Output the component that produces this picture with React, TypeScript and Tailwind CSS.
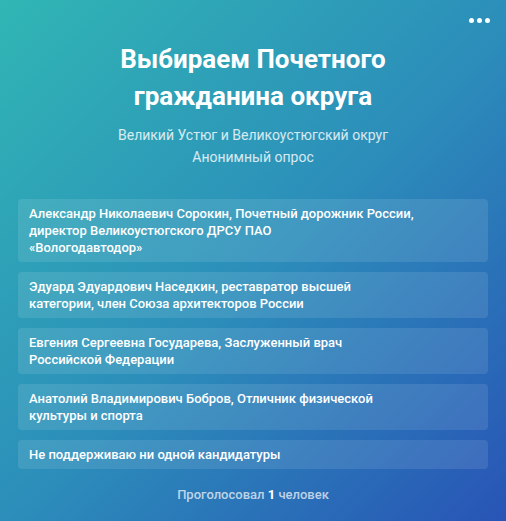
import React from "react";

const options = [
  "Александр Николаевич Сорокин, Почетный дорожник России, директор Великоустюгского ДРСУ ПАО\n«Вологодавтодор»",
  "Эдуард Эдуардович Наседкин, реставратор высшей категории, член Союза архитекторов России",
  "Евгения Сергеевна Государева, Заслуженный врач Российской Федерации",
  "Анатолий Владимирович Бобров, Отличник физической культуры и спорта",
  "Не поддерживаю ни одной кандидатуры",
];

function MoreDots() {
  return (
    <div className="absolute right-[16px] top-[18px] flex gap-[3px]">
      <span className="h-[5px] w-[5px] rounded-full bg-white" />
      <span className="h-[5px] w-[5px] rounded-full bg-white" />
      <span className="h-[5px] w-[5px] rounded-full bg-white" />
    </div>
  );
}

export default function App() {
  return (
    <div
      className="relative flex h-[521px] w-[506px] flex-col items-center overflow-hidden bg-[linear-gradient(135deg,#30b6b4_0%,#2c8fba_50%,#2854b6_100%)] text-white"
      style={{ fontFamily: "Roboto, 'Noto Sans', sans-serif" }}
    >
      <MoreDots />
      <h1 className="mt-[41px] w-[320px] text-center text-[26px] font-bold leading-[37px]">
        Выбираем Почетного гражданина округа
      </h1>
      <div className="mt-[9px] text-center text-[14px] leading-[22px] text-white/80">
        <div>Великий Устюг и Великоустюгский округ</div>
        <div>Анонимный опрос</div>
      </div>
      <div className="mt-[31px] flex w-[470px] flex-col gap-[10px]">
        {options.map((o) => (
          <div key={o} className="rounded-[4px] bg-white/10 py-[6px] pl-[11px] pr-[70px]">
            <div className="whitespace-pre-line text-[13px] font-medium leading-[17px]">{o}</div>
          </div>
        ))}
      </div>
      <div className="mt-[17px] text-[13px] font-medium leading-[18px] text-white/70">
        Проголосовал <span className="font-bold text-white">1</span> человек
      </div>
    </div>
  );
}
